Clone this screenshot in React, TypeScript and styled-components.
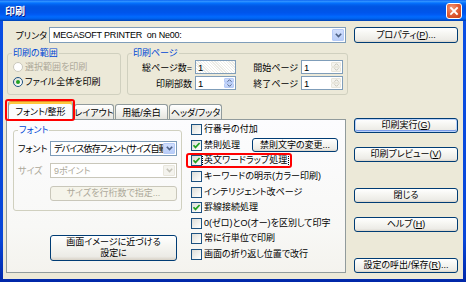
import React from "react";
import styled, { createGlobalStyle, css } from "styled-components";

const GlobalStyle = createGlobalStyle`
  html, body { margin: 0; padding: 0; background: #ffffff; }
  body {
    font-family: "Liberation Sans", "Noto Sans CJK JP", sans-serif;
    font-size: 9px;
    font-feature-settings: "palt";
    color: #000;
  }
  * { box-sizing: border-box; }
`;

const Window = styled.div`
  width: 466px;
  height: 282px;
  display: flex;
  flex-direction: column;
  background: linear-gradient(180deg, #0A4FE4 0%, #0846D8 85%, #0027A8 100%);
`;

const TitleBar = styled.div`
  height: 21px;
  flex: none;
  display: flex;
  align-items: center;
  padding: 0 4px 0 5px;
  background: linear-gradient(
    180deg,
    #0058ee 0%,
    #3593ff 5%,
    #288eff 8%,
    #127dff 12%,
    #036ffc 16%,
    #0262ee 22%,
    #0057e5 30%,
    #0054e3 40%,
    #0055eb 60%,
    #005bf5 70%,
    #026afe 80%,
    #0062ef 88%,
    #0052d6 94%,
    #0040ab 100%
  );
`;

const Title = styled.span`
  color: #ffffff;
  font-family: "Noto Sans CJK JP", sans-serif;
  font-size: 10px;
  font-weight: bold;
  text-shadow: 1px 1px 0 #0a1883;
`;

const CloseButton = styled.span`
  margin-left: auto;
  width: 16px;
  height: 16px;
  border: 1px solid #ffffff;
  border-radius: 3px;
  background: radial-gradient(circle at 35% 30%, #f29a7a 0%, #e2613a 45%, #c73b12 100%);
  display: flex;
  align-items: center;
  justify-content: center;
`;

const Body = styled.div`
  flex: 1;
  margin: 0 3px 3px 3px;
  background: #ece9d8;
  display: flex;
  flex-direction: column;
  padding: 6px 5px 6px 0;
`;

const PrinterRow = styled.div`
  display: flex;
  align-items: center;
  height: 16px;
`;

const FieldLabel = styled.span<{ $w: number; $align?: string; $disabled?: boolean }>`
  width: ${(p) => p.$w}px;
  flex: none;
  text-align: ${(p) => p.$align ?? "left"};
  white-space: nowrap;
  color: ${(p) => (p.$disabled ? "#ACA899" : "#000")};
`;

const PageLabel = styled.span`
  text-align: right;
  padding-right: 3px;
  white-space: nowrap;
`;

const Combo = styled.div<{ $w: number; $h: number; $disabled?: boolean }>`
  width: ${(p) => p.$w}px;
  height: ${(p) => p.$h}px;
  flex: none;
  display: flex;
  align-items: stretch;
  border: 1px solid ${(p) => (p.$disabled ? "#C9C7BA" : "#7F9DB9")};
  background: #ffffff;
  padding: 1px;
`;

const ComboText = styled.span<{ $disabled?: boolean; $spacing?: number }>`
  flex: 1;
  min-width: 0;
  padding-left: 2px;
  display: flex;
  align-items: center;
  white-space: pre;
  overflow: hidden;
  letter-spacing: ${(p) => p.$spacing ?? 0}px;
  color: ${(p) => (p.$disabled ? "#ACA899" : "#000")};
`;

const DropButton = styled.span<{ $disabled?: boolean }>`
  width: 12px;
  flex: none;
  display: flex;
  align-items: center;
  justify-content: center;
  border-radius: 1px;
  border: 1px solid ${(p) => (p.$disabled ? "#E8E6DC" : "#B6CBF7")};
  background: ${(p) =>
    p.$disabled ? "#F4F3EE" : "linear-gradient(180deg, #D2DFFD 0%, #B9CDF8 100%)"};
`;

const XPButton = styled.button<{ $w: number; $h?: number; $default?: boolean; $mt?: number }>`
  font: inherit;
  font-size: 9px;
  font-feature-settings: "palt";
  color: #000;
  width: ${(p) => p.$w}px;
  height: ${(p) => p.$h ?? 15}px;
  flex: none;
  margin: ${(p) => p.$mt ?? 0}px 0 0 0;
  padding: 0;
  border: 1px solid #003c74;
  border-radius: 3px;
  background: linear-gradient(180deg, #ffffff 0%, #f6f6f2 40%, #ecebe6 85%, #d8d2c7 100%);
  display: flex;
  align-items: center;
  justify-content: center;
  text-align: center;
  line-height: 11px;
  white-space: nowrap;
  ${(p) =>
    p.$default &&
    css`
      box-shadow: inset 0 0 0 1px #b9d1fa, inset 0 -1px 0 1px #7a9be8;
    `}
  &:disabled {
    color: #aca899;
    border-color: #c9c7ba;
    background: #f5f4ea;
  }
`;

const GroupsRow = styled.div`
  display: flex;
  gap: 6px;
  margin-top: 5px;
  padding-left: 4px;
`;

const GroupBox = styled.fieldset<{ $w: number; $h: number }>`
  margin: 0;
  min-width: 0;
  width: ${(p) => p.$w}px;
  height: ${(p) => p.$h}px;
  flex: none;
  border: 1px solid #d0d0bf;
  border-radius: 3px;
  padding: 0 4px 4px 4px;
`;

const Legend = styled.legend`
  padding: 0 1px;
  margin: 0;
  color: #0046d5;
  font-size: 9px;
  line-height: 11px;
`;

const RadioList = styled.div`
  display: flex;
  flex-direction: column;
`;

const RadioRow = styled.label<{ $disabled?: boolean }>`
  height: 15px;
  display: flex;
  align-items: center;
  gap: 2px;
  padding-left: 1px;
  color: ${(p) => (p.$disabled ? "#ACA899" : "#000")};
  white-space: nowrap;
`;

const RadioCircle = styled.span<{ $checked?: boolean; $disabled?: boolean }>`
  width: 10px;
  height: 10px;
  flex: none;
  border-radius: 50%;
  border: 1px solid ${(p) => (p.$disabled ? "#CAC8BB" : "#1C5180")};
  background: ${(p) =>
    p.$disabled ? "#ffffff" : "linear-gradient(135deg, #DCDCD7 0%, #FFFFFF 90%)"};
  display: flex;
  align-items: center;
  justify-content: center;
  &::after {
    content: "";
    width: 4px;
    height: 4px;
    border-radius: 50%;
    background: #21a121;
    display: ${(p) => (p.$checked ? "block" : "none")};
  }
`;

const PagesGrid = styled.div`
  display: grid;
  grid-template-columns: 63px 41px 65px 42px;
  grid-auto-rows: 14px;
  row-gap: 2px;
  padding-top: 1px;
  align-items: center;
`;

const SpinBox = styled.div<{ $w: number; $readonly?: boolean }>`
  width: ${(p) => p.$w}px;
  height: 14px;
  display: flex;
  align-items: stretch;
  border: 1px solid #7f9db9;
  background: ${(p) =>
    p.$readonly
      ? "repeating-linear-gradient(45deg, #FFFFFF 0px, #FFFFFF 1px, #ECECE6 1px, #ECECE6 2px)"
      : "#ffffff"};
`;

const SpinValue = styled.span`
  flex: 1;
  padding-left: 2px;
  display: flex;
  align-items: center;
  font-size: 9.5px;
`;

const SpinButtons = styled.span`
  width: 10px;
  flex: none;
  display: flex;
  flex-direction: column;
  margin: 1px;
`;

const SpinBtn = styled.span<{ $disabled?: boolean }>`
  flex: 1;
  display: flex;
  align-items: center;
  justify-content: center;
  border-radius: 1px;
  border: 1px solid ${(p) => (p.$disabled ? "#E8E6DC" : "#B6CBF7")};
  background: ${(p) =>
    p.$disabled ? "#F4F3EE" : "linear-gradient(180deg, #D2DFFD 0%, #B9CDF8 100%)"};
`;

const MainRow = styled.div`
  flex: 1;
  display: flex;
  margin-top: 6px;
  min-height: 0;
`;

const TabControl = styled.div`
  width: 340px;
  margin-left: 3px;
  display: flex;
  flex-direction: column;
`;

const TabStrip = styled.div`
  height: 18px;
  display: flex;
  align-items: flex-end;
  padding-left: 2px;
  gap: 1px;
`;

const Tab = styled.div<{ $w: number; $active?: boolean; $highlight?: boolean }>`
  position: relative;
  width: ${(p) => p.$w}px;
  height: ${(p) => (p.$active ? 19 : 15)}px;
  margin-bottom: ${(p) => (p.$active ? -1 : 0)}px;
  display: flex;
  align-items: center;
  justify-content: center;
  white-space: nowrap;
  border: 1px solid #919b9c;
  border-bottom: none;
  border-radius: 3px 3px 0 0;
  z-index: ${(p) => (p.$active ? 2 : 1)};
  background: ${(p) =>
    p.$active ? "#FCFCFE" : "linear-gradient(180deg, #FFFFFF 0%, #F3F3EF 50%, #E6E5DE 100%)"};
  ${(p) =>
    p.$active &&
    css`
      border-top-color: #e68b2c;
      box-shadow: inset 0 2px 0 #ffc73c;
      padding-top: 1px;
    `}
  ${(p) =>
    p.$highlight &&
    css`
      &::after {
        content: "";
        position: absolute;
        left: -4px;
        right: -3px;
        top: -3px;
        bottom: -1px;
        border: 2px solid #f00;
        border-radius: 3px;
        pointer-events: none;
      }
    `}
`;

const TabPanel = styled.div`
  flex: 1;
  display: flex;
  border: 1px solid #919b9c;
  background: linear-gradient(180deg, #fcfcfe 0%, #f8f8f6 70%, #f4f3ee 100%);
`;

const FontColumn = styled.div`
  width: 175px;
  flex: none;
  padding: 5px 0 0 6px;
  display: flex;
  flex-direction: column;
`;

const FontGrid = styled.div`
  display: grid;
  grid-template-columns: 32px 127px;
  grid-auto-rows: 15px;
  row-gap: 7px;
  align-items: center;
  padding-top: 5px;
  & > button {
    margin-top: 2px;
    grid-column: 2;
  }
`;

const CheckColumn = styled.div`
  flex: 1;
  margin-left: 8px;
  padding: 2px 7px 0 0;
  display: flex;
  flex-direction: column;
`;

const CheckRow = styled.div`
  height: 15.6px;
  display: flex;
  align-items: center;
`;

const CheckItem = styled.label<{ $highlight?: boolean }>`
  position: relative;
  display: flex;
  align-items: center;
  padding-left: 1px;
  gap: 1px;
  white-space: nowrap;
  ${(p) =>
    p.$highlight &&
    css`
      &::after {
        content: "";
        position: absolute;
        left: -4px;
        right: -4px;
        top: -2px;
        bottom: -2px;
        border: 2px solid #f00;
        border-radius: 3px;
        pointer-events: none;
      }
    `}
`;

const CheckBox = styled.span`
  width: 11px;
  height: 11px;
  flex: none;
  border: 1px solid #1c5180;
  background: linear-gradient(135deg, #dcdcd7 0%, #f6f6f3 70%, #ffffff 100%);
  display: flex;
  align-items: center;
  justify-content: center;
`;

const CheckText = styled.span<{ $focused?: boolean }>`
  line-height: 11px;
  padding: 0 1px;
  outline: ${(p) => (p.$focused ? "1px dotted #000" : "none")};
  outline-offset: 0;
`;

const ButtonColumn = styled.div`
  width: 104px;
  margin-left: 8px;
  padding-top: 17px;
  display: flex;
  flex-direction: column;
`;

const Chevron = ({ color = "#4D6185" }: { color?: string }) => (
  <svg width="7" height="5" viewBox="0 0 7 5">
    <polyline points="0.8,0.8 3.5,3.6 6.2,0.8" fill="none" stroke={color} strokeWidth="1.6" />
  </svg>
);

const SpinArrow = ({ up, color }: { up?: boolean; color: string }) => (
  <svg width="5" height="3" viewBox="0 0 5 3">
    <polyline
      points={up ? "0.5,2.7 2.5,0.7 4.5,2.7" : "0.5,0.3 2.5,2.3 4.5,0.3"}
      fill="none"
      stroke={color}
      strokeWidth="1"
    />
  </svg>
);

const CheckMark = () => (
  <svg width="9" height="9" viewBox="0 0 9 9">
    <polyline points="1.5,4.2 3.5,6.4 7.6,2" fill="none" stroke="#21A121" strokeWidth="1.7" />
  </svg>
);

const CloseIcon = () => (
  <svg width="10" height="10" viewBox="0 0 10 10">
    <path d="M2 2 L8 8 M8 2 L2 8" stroke="#ffffff" strokeWidth="1.8" strokeLinecap="square" />
  </svg>
);

type SpinProps = { w: number; value: string; disabled?: boolean; readonly?: boolean };

const Spin = ({ w, value, disabled, readonly }: SpinProps) => (
  <SpinBox $w={w} $readonly={readonly}>
    <SpinValue>{value}</SpinValue>
    {!readonly && (
      <SpinButtons>
        <SpinBtn $disabled={disabled}>
          <SpinArrow up color={disabled ? "#C5C3B8" : "#4D6185"} />
        </SpinBtn>
        <SpinBtn $disabled={disabled}>
          <SpinArrow color={disabled ? "#C5C3B8" : "#4D6185"} />
        </SpinBtn>
      </SpinButtons>
    )}
  </SpinBox>
);

type Option = {
  label: string;
  checked?: boolean;
  focused?: boolean;
  highlight?: boolean;
  button?: string;
};

const options: Option[] = [
  { label: "行番号の付加" },
  { label: "禁則処理", checked: true, button: "禁則文字の変更..." },
  { label: "英文ワードラップ処理", checked: true, focused: true, highlight: true },
  { label: "キーワードの明示(カラー印刷)" },
  { label: "インテリジェント改ページ" },
  { label: "罫線接続処理", checked: true },
  { label: "0(ゼロ)とO(オー)を区別して印字" },
  { label: "常に行単位で印刷" },
  { label: "画面の折り返し位置で改行" },
];

const tabs = [
  { label: "フォント/整形", w: 65, active: true },
  { label: "レイアウト", w: 40 },
  { label: "用紙/余白", w: 53 },
  { label: "ヘッダ/フッタ", w: 53 },
];

export default function App() {
  return (
    <>
      <GlobalStyle />
      <Window>
        <TitleBar>
          <Title>印刷</Title>
          <CloseButton>
            <CloseIcon />
          </CloseButton>
        </TitleBar>
        <Body>
          <PrinterRow>
            <FieldLabel $w={44} $align="right">
              プリンタ
            </FieldLabel>
            <Combo $w={297} $h={16} style={{ marginLeft: 2 }}>
              <ComboText $spacing={-0.2}>MEGASOFT PRINTER  on Ne00:</ComboText>
              <DropButton>
                <Chevron />
              </DropButton>
            </Combo>
            <XPButton $w={104} $h={16} style={{ marginLeft: 8 }}>
              プロパティ(<u>P</u>)...
            </XPButton>
          </PrinterRow>

          <GroupsRow>
            <GroupBox $w={114} $h={47}>
              <Legend>印刷の範囲</Legend>
              <RadioList>
                <RadioRow $disabled>
                  <RadioCircle $disabled />
                  選択範囲を印刷
                </RadioRow>
                <RadioRow>
                  <RadioCircle $checked />
                  ファイル全体を印刷
                </RadioRow>
              </RadioList>
            </GroupBox>
            <GroupBox $w={221} $h={47}>
              <Legend>印刷ページ</Legend>
              <PagesGrid>
                <PageLabel>総ページ数=</PageLabel>
                <Spin w={41} value="1" readonly />
                <PageLabel>開始ページ</PageLabel>
                <Spin w={42} value="1" disabled />
                <PageLabel>印刷部数</PageLabel>
                <Spin w={41} value="1" />
                <PageLabel>終了ページ</PageLabel>
                <Spin w={42} value="1" disabled />
              </PagesGrid>
            </GroupBox>
          </GroupsRow>

          <MainRow>
            <TabControl>
              <TabStrip>
                {tabs.map((t) => (
                  <Tab key={t.label} $w={t.w} $active={t.active} $highlight={t.active}>
                    {t.label}
                  </Tab>
                ))}
              </TabStrip>
              <TabPanel>
                <FontColumn>
                  <GroupBox $w={169} $h={86}>
                    <Legend>フォント</Legend>
                    <FontGrid>
                      <FieldLabel $w={32}>フォント</FieldLabel>
                      <Combo $w={127} $h={15}>
                        <ComboText $spacing={-0.8}>デバイス依存フォント(サイズ自動)</ComboText>
                        <DropButton>
                          <Chevron />
                        </DropButton>
                      </Combo>
                      <FieldLabel $w={32} $disabled>
                        サイズ
                      </FieldLabel>
                      <Combo $w={127} $h={15} $disabled>
                        <ComboText $disabled>9ポイント</ComboText>
                        <DropButton $disabled>
                          <Chevron color="#C5C3B8" />
                        </DropButton>
                      </Combo>
                      <XPButton $w={127} disabled>
                        サイズを行桁数で指定...
                      </XPButton>
                    </FontGrid>
                  </GroupBox>
                  <XPButton $w={127} $h={26} $mt={24} style={{ marginLeft: 37 }}>
                    画面イメージに近づける
                    <br />
                    設定に
                  </XPButton>
                </FontColumn>
                <CheckColumn>
                  {options.map((o) => (
                    <CheckRow key={o.label}>
                      <CheckItem $highlight={o.highlight}>
                        <CheckBox>{o.checked && <CheckMark />}</CheckBox>
                        <CheckText $focused={o.focused}>{o.label}</CheckText>
                      </CheckItem>
                      {o.button && (
                        <XPButton $w={86} $h={14} style={{ marginLeft: "auto" }}>
                          {o.button}
                        </XPButton>
                      )}
                    </CheckRow>
                  ))}
                </CheckColumn>
              </TabPanel>
            </TabControl>
            <ButtonColumn>
              <XPButton $w={104} $default>
                印刷実行(<u>G</u>)
              </XPButton>
              <XPButton $w={104} $mt={14}>
                印刷プレビュー(<u>V</u>)
              </XPButton>
              <XPButton $w={104} $mt={26}>
                閉じる
              </XPButton>
              <XPButton $w={104} $mt={14}>
                ヘルプ(<u>H</u>)
              </XPButton>
              <XPButton $w={104} $mt={26}>
                設定の呼出/保存(<u>R</u>)...
              </XPButton>
            </ButtonColumn>
          </MainRow>
        </Body>
      </Window>
    </>
  );
}
